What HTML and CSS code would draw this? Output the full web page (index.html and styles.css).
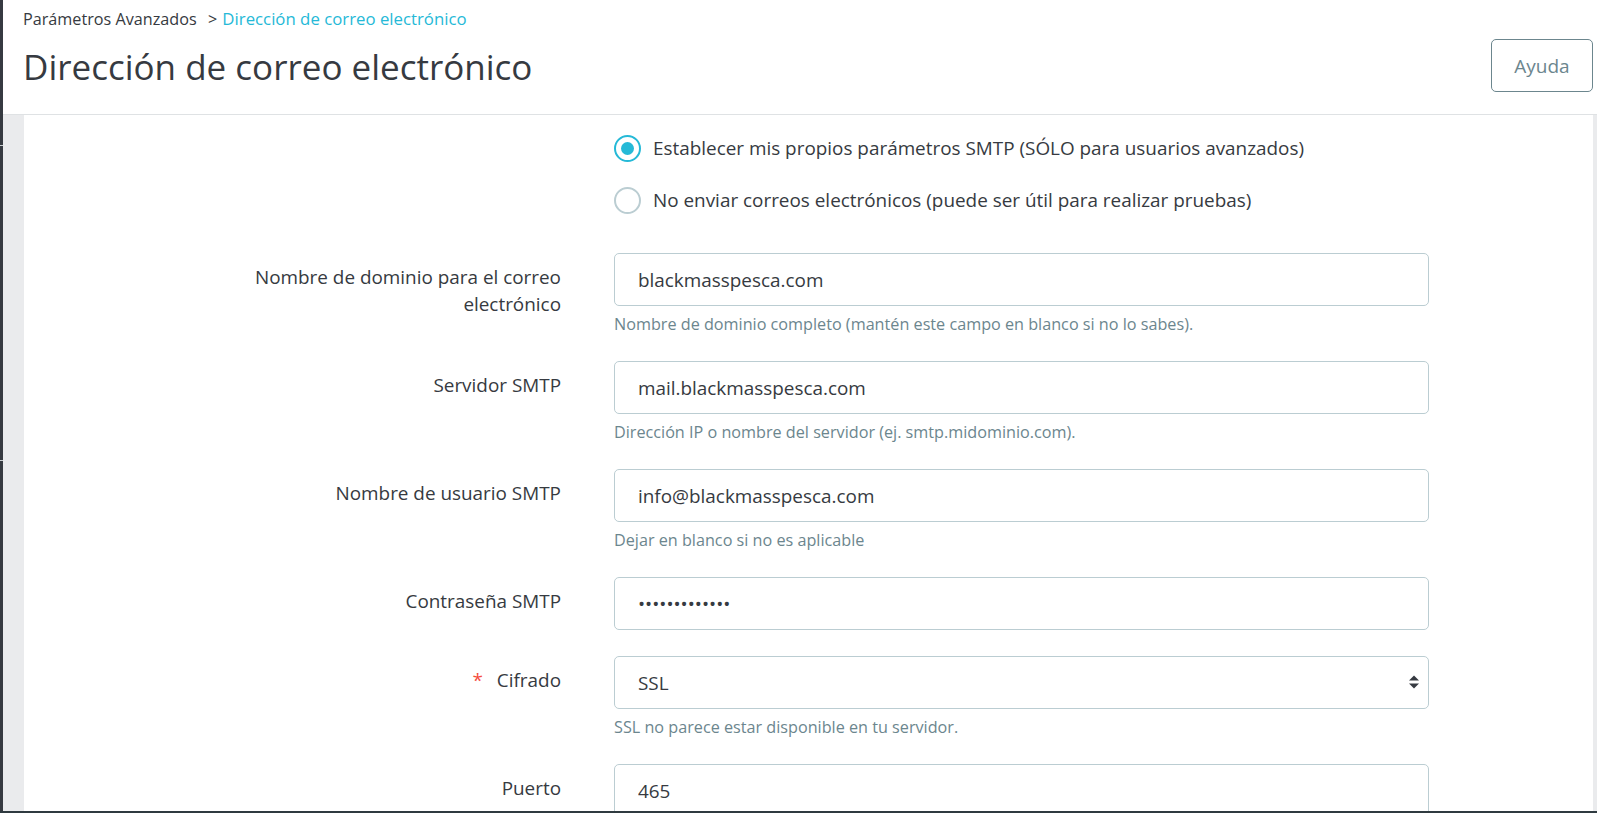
FILE: index.html
```html
<!DOCTYPE html>
<html>
<head>
<meta http-equiv="Content-Type" content="text/html; charset=UTF-8">
<meta name="viewport" content="width=device-width, initial-scale=1.0">
<title>Dirección de correo electrónico</title>

<link rel="stylesheet" href="styles.css">

</head>
<body>
<div class='app'>
<div class='sidebar'>
    <div class='sidebar-sep first'></div>
    <div class='sidebar-sep second'></div>
</div>

<div class='main'>
    <div class='page-head'>
        <div class='head-left'>
            <div class='breadcrumb'>
                <span>Parámetros Avanzados</span>
                <span class='crumb-sep'>&gt;</span>
                <a href='javascript:void(0)'>Dirección de correo electrónico</a>
            </div>
            <h1 class='page-title'>Dirección de correo electrónico</h1>
        </div>
        <a class='btn-help' href='javascript:void(0)'>Ayuda</a>
    </div>

    <div class='content'>
    <div class='card'>

        <div class='radio-group'>
            <label class='radio-row'>
                <span class='radio checked'></span>
                Establecer mis propios parámetros SMTP (SÓLO para usuarios avanzados)
            </label>
            <label class='radio-row'>
                <span class='radio'></span>
                No enviar correos electrónicos (puede ser útil para realizar pruebas)
            </label>
        </div>

        <div class='form-row'>
            <div class='form-label'>Nombre de dominio para el correo electrónico</div>
            <div class='form-field'>
                <input class='form-input' value='blackmasspesca.com'>
                <div class='help'>Nombre de dominio completo (mantén este campo en blanco si no lo sabes).</div>
            </div>
        </div>

        <div class='form-row'>
            <div class='form-label'>Servidor SMTP</div>
            <div class='form-field'>
                <input class='form-input' value='mail.blackmasspesca.com'>
                <div class='help'>Dirección IP o nombre del servidor (ej. smtp.midominio.com).</div>
            </div>
        </div>

        <div class='form-row'>
            <div class='form-label'>Nombre de usuario SMTP</div>
            <div class='form-field'>
                <input class='form-input' value='info@blackmasspesca.com'>
                <div class='help'>Dejar en blanco si no es aplicable</div>
            </div>
        </div>

        <div class='form-row'>
            <div class='form-label'>Contraseña SMTP</div>
            <div class='form-field'>
                <input class='form-input' type='password' value='xxxxxxxxxxxxx'>
            </div>
        </div>

        <div class='form-row'>
            <div class='form-label'><span class='required'>*</span>Cifrado</div>
            <div class='form-field'>
                <div class='select-wrap'>
                    <select class='form-input form-select'>
                        <option>Ninguno</option>
                        <option>TLS</option>
                        <option selected>SSL</option>
                    </select>
                    <svg class='select-arrow' width='12' height='16' viewBox='0 0 12 16'>
                        <path d='M1 6.5 L6 1.5 L11 6.5 Z' fill='#363a41'/>
                        <path d='M1 9.5 L6 14.5 L11 9.5 Z' fill='#363a41'/>
                    </svg>
                </div>
                <div class='help'>SSL no parece estar disponible en tu servidor.</div>
            </div>
        </div>

        <div class='form-row'>
            <div class='form-label'>Puerto</div>
            <div class='form-field'>
                <input class='form-input' value='465'>
            </div>
        </div>

    </div>
    <div class='content-right'></div>
    </div>
</div>
</div>
<div class='bottom-bar'></div>
</body>
</html>
```

FILE: styles.css
```css
html, body {
    margin: 0;
    height: 100%;
    overflow: hidden;
}

body {
    font-family: "Open Sans", "Noto Sans", sans-serif;
    color: #363a41;
    display: flex;
    flex-direction: column;
    background-color: #fff;
}

.app {
    flex: 1;
    display: flex;
    min-height: 0;
}

.bottom-bar {
    height: 2px;
    background-color: #2f3a40;
}

.sidebar {
    width: 3px;
    background-color: #363a41;
    display: flex;
    flex-direction: column;
}

.sidebar-sep {
    height: 1px;
    background-color: #c8cdd0;
}

.sidebar-sep.first {
    margin-top: 145px;
}

.sidebar-sep.second {
    margin-top: 314px;
}

.main {
    flex: 1;
    display: flex;
    flex-direction: column;
    min-width: 0;
}

/* header */

.page-head {
    height: 114px;
    border-bottom: 1px solid #dfe2e4;
    display: flex;
    justify-content: space-between;
    align-items: flex-start;
    padding: 0 4px 0 20px;
    background-color: #fff;
}

.breadcrumb {
    font-size: 16.2px;
    line-height: 22px;
    margin-top: 8px;
    color: #363a41;
}

.breadcrumb a {
    color: #25b9d7;
    text-decoration: none;
    font-size: 16.8px;
}

.crumb-sep {
    margin: 0 1px 0 7px;
}

.page-title {
    font-size: 35px;
    font-weight: 400;
    line-height: 46px;
    margin: 14px 0 0 0;
}

.btn-help {
    margin-top: 39px;
    width: 100px;
    height: 51px;
    border: 1px solid #6c868e;
    border-radius: 5px;
    color: #6c868e;
    font-size: 19px;
    text-decoration: none;
    display: flex;
    align-items: center;
    justify-content: center;
}

/* content */

.content {
    flex: 1;
    display: flex;
    background-color: #eaebed;
    padding-left: 21px;
    min-height: 0;
}

.card {
    flex: 1;
    background-color: #fff;
    padding-top: 7px;
}

.content-right {
    width: 4px;
}

.radio-group {
    margin-left: 590px;
    margin-bottom: 27px;
}

.radio-row {
    display: flex;
    align-items: center;
    height: 52px;
    font-size: 18.9px;
    line-height: 27px;
}

.radio {
    width: 23px;
    height: 23px;
    border: 2px solid #bbcdd2;
    border-radius: 50%;
    margin-right: 12px;
    box-sizing: content-box;
    display: flex;
    align-items: center;
    justify-content: center;
}

.radio.checked {
    border-color: #25b9d7;
}

.radio.checked::after {
    content: "";
    width: 13px;
    height: 13px;
    border-radius: 50%;
    background-color: #25b9d7;
}

.form-row {
    display: grid;
    grid-template-columns: 537px 815px;
    column-gap: 53px;
    margin-bottom: 26px;
}

.form-label {
    text-align: right;
    font-size: 18.9px;
    line-height: 27px;
    padding-top: 11px;
    padding-left: 200px;
}

.required {
    color: #f54c3e;
    margin-right: 14px;
}

.form-input {
    box-sizing: border-box;
    width: 100%;
    height: 53px;
    border: 1px solid #bbcdd2;
    border-radius: 5px;
    padding: 0 23px;
    font-family: "Open Sans", "Noto Sans", sans-serif;
    font-size: 18.9px;
    color: #363a41;
    background-color: #fff;
    outline: none;
    display: block;
}

.form-select {
    appearance: none;
    -webkit-appearance: none;
}

.select-wrap {
    position: relative;
}

.select-arrow {
    position: absolute;
    right: 9px;
    top: 18px;
}

.help {
    font-size: 16.2px;
    line-height: 22px;
    margin-top: 7px;
    color: #6c868e;
}
```
